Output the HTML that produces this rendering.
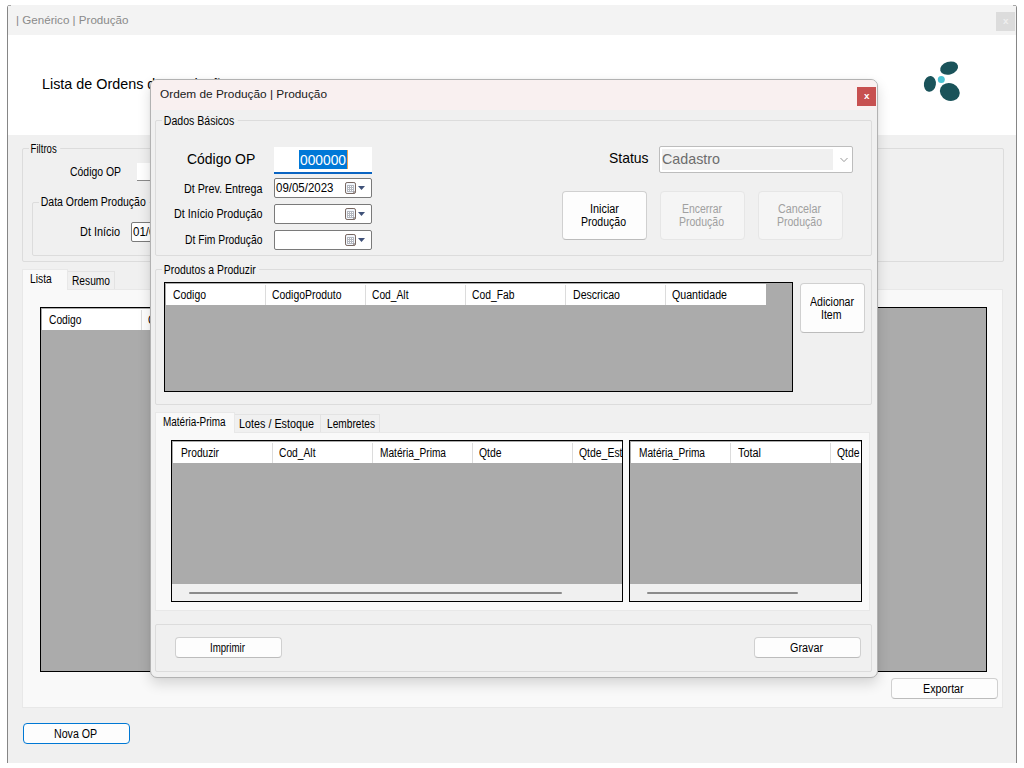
<!DOCTYPE html>
<html lang="pt-BR">
<head>
<meta charset="utf-8">
<title>Genérico | Produção</title>
<style>
*{box-sizing:border-box;margin:0;padding:0}
html,body{width:1024px;height:768px;overflow:hidden;background:#fff}
body{font-family:"Liberation Sans",sans-serif;font-size:11px;color:#000;position:relative}
.a{position:absolute}
.t{position:absolute;white-space:nowrap;transform-origin:0 50%;font-family:"Liberation Sans",sans-serif}
.gb{position:absolute;border:1px solid #dcdcdc;border-radius:2px}
.btn{position:absolute;background:#fdfdfd;border:1px solid #d0d0d0;border-bottom-color:#bcbcbc;border-radius:4px}
.btn.dis{background:#f5f5f5;border-color:#e6e6e6}
.grid{position:absolute;background:#ababab;border:1px solid #000;overflow:hidden}
.grid .hd{position:absolute;left:1px;top:1px;height:21px;background:#fff}
.grid .dv{position:absolute;top:2px;height:20px;width:1px;background:#dcdcdc}
.grid .sb{position:absolute;left:0;right:0;bottom:0;height:17px;background:#f0f0f0}
.grid .th{position:absolute;height:2px;top:8px;background:#8b8b8b;border-radius:1px}
.dp{position:absolute;background:#fff;border:1px solid #7a7a7a;border-radius:2px}
.tab{position:absolute;background:#f0f0f0;border:1px solid #e3e3e3;border-bottom:none}
.tab.sel{background:#f9f9f9;border-color:#e8e8e8}
.page{position:absolute;background:#f9f9f9;border:1px solid #e8e8e8}
</style>
</head>
<body>

<svg width="0" height="0" style="position:absolute"><defs>
<symbol id="cal" viewBox="0 0 22 13">
  <rect x="0.5" y="0.5" width="10" height="11" rx="1.6" fill="#f2f6fc" stroke="#77665f" stroke-width="1"/>
  <rect x="2" y="3" width="7" height="7" fill="#b4b8c0"/>
  <g fill="#fff"><rect x="3" y="4" width="1" height="1"/><rect x="5" y="4" width="1" height="1"/><rect x="7" y="4" width="1" height="1"/>
  <rect x="3" y="6" width="1" height="1"/><rect x="5" y="6" width="1" height="1"/><rect x="7" y="6" width="1" height="1"/>
  <rect x="3" y="8" width="1" height="1"/><rect x="5" y="8" width="1" height="1"/><rect x="7" y="8" width="1" height="1"/></g>
  <path d="M8.4 9.4 L10.4 9.4 L8.4 11.4 Z" fill="#6f5f5a"/>
  <path d="M13 4 L20 4 L16.5 8 Z" fill="#3f5178"/>
</symbol></defs></svg>
<!-- ================= MAIN WINDOW ================= -->
<div class="a" id="win" style="left:7px;top:5px;width:1010px;height:758px;background:#f0f0f0;border-left:1px solid #868686;border-right:1px solid #868686;border-top-left-radius:3px;border-top-right-radius:3px;overflow:hidden"></div>
<div class="a" style="left:8px;top:5px;width:1008px;height:30px;background:#f3f3f3"></div>
<div class="a" style="left:1013px;top:5px;width:3px;height:1px;background:#a8a8a8"></div>
<div class="a" style="left:8px;top:5px;width:3px;height:1px;background:#a8a8a8"></div>
<div class="a" style="left:996px;top:12px;width:19px;height:19px;background:#dcdcdc"></div>
<div class="a" style="left:8px;top:35px;width:1008px;height:100px;background:#fff"></div>

<!-- logo -->
<svg class="a" style="left:900px;top:40px" width="96" height="72" viewBox="0 0 96 72">
  <ellipse cx="49.1" cy="28.1" rx="9.2" ry="6.4" transform="rotate(-17 49.1 28.1)" fill="#1a535a"/>
  <ellipse cx="29.9" cy="43.9" rx="6.0" ry="8.0" transform="rotate(8 29.9 43.9)" fill="#1a535a"/>
  <ellipse cx="49.8" cy="52.0" rx="10.2" ry="8.7" transform="rotate(25 49.8 52)" fill="#1a535a"/>
  <circle cx="41.3" cy="39.6" r="3.5" fill="#4cc3d3"/>
</svg>

<!-- Filtros groupbox -->
<div class="gb" style="left:22px;top:148px;width:982px;height:114px"></div>
<div class="a" style="left:137px;top:163px;width:100px;height:18px;background:#fff;border-bottom:1px solid #8a8a8a"></div>
<div class="gb" style="left:32px;top:202px;width:500px;height:54px"></div>
<div class="dp" style="left:131px;top:222px;width:98px;height:20px"></div>

<!-- main tab control -->
<div class="page" style="left:22px;top:289px;width:981px;height:419px"></div>
<div class="tab" style="left:67px;top:271px;width:48px;height:18px"></div>
<div class="tab sel" style="left:22px;top:269px;width:46px;height:21px"></div>

<!-- main grid -->
<div class="grid" style="left:40px;top:307px;width:947px;height:365px">
  <div class="hd" style="width:700px"></div>
  <div class="dv" style="left:100px"></div>
  <div class="dv" style="left:200px"></div>
</div>

<div class="btn" style="left:891px;top:678px;width:107px;height:21px"></div>
<div class="btn" style="left:23px;top:723px;width:107px;height:21px;border:1px solid #0078d4;background:#fdfdfd"></div>

<span class="t" style="left:16.30px;top:12.18px;font-size:11.6px;line-height:16px;transform:scaleX(1.0011);color:#8a8a8a;">| Genérico | Produção</span>
<span class="t" style="left:41.70px;top:74.05px;font-size:15px;line-height:20px;transform:scaleX(0.9573);color:#000;">Lista de Ordens de Produção</span>
<span class="t" style="left:30.50px;top:140.84px;font-size:12px;line-height:16px;transform:scaleX(0.8000);color:#000;background:#f0f0f0;padding:0 4px 0 2px;margin-left:-2px;">Filtros</span>
<span class="t" style="left:70.00px;top:163.84px;font-size:12px;line-height:16px;transform:scaleX(0.8688);color:#000;">Código OP</span>
<span class="t" style="left:40.50px;top:194.34px;font-size:12px;line-height:16px;transform:scaleX(0.8745);color:#000;background:#f0f0f0;padding:0 4px 0 2px;margin-left:-2px;">Data Ordem Produção</span>
<span class="t" style="left:79.50px;top:224.34px;font-size:12px;line-height:16px;transform:scaleX(0.9088);color:#000;">Dt Início</span>
<span class="t" style="left:133.00px;top:224.34px;font-size:12px;line-height:16px;transform:scaleX(0.9573);color:#000;">01/05/2023</span>
<span class="t" style="left:29.50px;top:270.84px;font-size:12px;line-height:16px;transform:scaleX(0.8577);color:#000;">Lista</span>
<span class="t" style="left:71.50px;top:272.84px;font-size:12px;line-height:16px;transform:scaleX(0.8503);color:#000;">Resumo</span>
<span class="t" style="left:49.00px;top:311.84px;font-size:12px;line-height:16px;transform:scaleX(0.8546);color:#000;">Codigo</span>
<span class="t" style="left:148.00px;top:311.84px;font-size:12px;line-height:16px;transform:scaleX(0.8681);color:#000;">CodigoProduto</span>
<span class="t" style="left:922.80px;top:681.34px;font-size:12px;line-height:16px;transform:scaleX(0.8973);color:#000;">Exportar</span>
<span class="t" style="left:53.80px;top:725.84px;font-size:12px;line-height:16px;transform:scaleX(0.8873);color:#000;">Nova OP</span>
<span class="t" style="left:1002.50px;top:14.07px;font-size:9.6px;line-height:14px;transform:scaleX(1.0292);color:#efefef;font-weight:bold;">x</span>

<!-- ================= DIALOG ================= -->
<div class="a" id="dlg" style="left:150px;top:79px;width:728px;height:599px;background:#f0f0f0;border:1px solid #b2b2b2;border-radius:7px;box-shadow:0 6px 13px rgba(0,0,0,.14),0 0 3px rgba(0,0,0,.05);overflow:hidden">
  <div class="a" style="left:0;top:0;width:728px;height:30px;background:#f9f0f0"></div>
</div>
<div class="a" style="left:857px;top:87px;width:19px;height:19px;background:#c75050"></div>

<!-- Dados Basicos -->
<div class="gb" style="left:155px;top:120px;width:717px;height:136px"></div>
<div class="a" style="left:274px;top:147px;width:98px;height:27px;background:#fff;border-bottom:2px solid #0a64c2"></div>
<div class="a" style="left:299px;top:150px;width:48px;height:19px;background:#0078d7"></div>
<div class="a" style="left:347px;top:150px;width:1px;height:19px;background:#f0a050"></div>

<div class="dp" style="left:274px;top:178px;width:98px;height:20px"></div>
<div class="dp" style="left:274px;top:204px;width:98px;height:20px"></div>
<div class="dp" style="left:274px;top:230px;width:98px;height:20px"></div>


<svg class="a" style="left:345px;top:182px" width="22" height="13"><use href="#cal"/></svg>
<svg class="a" style="left:345px;top:208px" width="22" height="13"><use href="#cal"/></svg>
<svg class="a" style="left:345px;top:234px" width="22" height="13"><use href="#cal"/></svg>
<!-- status combo -->
<div class="a" style="left:659px;top:146px;width:194px;height:27px;background:#fff;border:1px solid #bdbdbd;border-radius:2px"></div>
<div class="a" style="left:662px;top:149px;width:171px;height:21px;background:#f0f0f0"></div>
<svg class="a" style="left:839px;top:156px" width="10" height="8" viewBox="0 0 10 8"><path d="M1.5 2 L5 5.6 L8.5 2" stroke="#9a9a9a" stroke-width="1" fill="none"/></svg>

<div class="btn" style="left:562px;top:191px;width:85px;height:49px"></div>
<div class="btn dis" style="left:660px;top:191px;width:85px;height:49px"></div>
<div class="btn dis" style="left:758px;top:191px;width:85px;height:49px"></div>

<!-- Produtos a Produzir -->
<div class="gb" style="left:155px;top:269px;width:717px;height:136px"></div>
<div class="grid" style="left:164px;top:282px;width:629px;height:110px">
  <div class="hd" style="width:600px"></div>
  <div class="dv" style="left:100px"></div><div class="dv" style="left:200px"></div><div class="dv" style="left:300px"></div>
  <div class="dv" style="left:400px"></div><div class="dv" style="left:500px"></div>
</div>
<div class="btn" style="left:800px;top:283px;width:65px;height:50px"></div>

<!-- dialog tabs -->
<div class="page" style="left:155px;top:432px;width:715px;height:179px"></div>
<div class="tab" style="left:234px;top:414px;width:87px;height:18px"></div>
<div class="tab" style="left:320px;top:414px;width:60px;height:18px"></div>
<div class="tab sel" style="left:155px;top:412px;width:80px;height:21px"></div>

<div class="grid" style="left:171px;top:440px;width:452px;height:162px">
  <div class="hd" style="width:452px"></div>
  <div class="dv" style="left:100px"></div><div class="dv" style="left:200px"></div><div class="dv" style="left:300px"></div><div class="dv" style="left:400px"></div>
  <div class="sb"><div class="th" style="left:17px;width:373px"></div></div>
</div>
<div class="grid" style="left:629px;top:440px;width:233px;height:162px">
  <div class="hd" style="width:233px"></div>
  <div class="dv" style="left:100px"></div><div class="dv" style="left:200px"></div>
  <div class="sb"><div class="th" style="left:17px;width:151px"></div></div>
</div>

<!-- bottom groupbox -->
<div class="gb" style="left:155px;top:624px;width:717px;height:48px"></div>
<div class="btn" style="left:175px;top:637px;width:107px;height:21px"></div>
<div class="btn" style="left:754px;top:637px;width:107px;height:21px"></div>

<span class="t" style="left:159.50px;top:86.48px;font-size:11.6px;line-height:16px;transform:scaleX(1.0215);color:#1a1a1a;">Ordem de Produção | Produção</span>
<span class="t" style="left:863.90px;top:89.07px;font-size:9.6px;line-height:14px;transform:scaleX(1.0292);color:#fff;font-weight:bold;">x</span>
<span class="t" style="left:163.50px;top:112.84px;font-size:12px;line-height:16px;transform:scaleX(0.8807);color:#000;background:#f0f0f0;padding:0 4px 0 2px;margin-left:-2px;">Dados Básicos</span>
<span class="t" style="left:186.80px;top:148.94px;font-size:14.6px;line-height:20px;transform:scaleX(0.9567);color:#000;">Código OP</span>
<span class="t" style="left:299.50px;top:149.54px;font-size:14.6px;line-height:20px;transform:scaleX(0.9445);color:#fff;">000000</span>
<span class="t" style="left:183.50px;top:180.84px;font-size:12px;line-height:16px;transform:scaleX(0.8938);color:#000;">Dt Prev. Entrega</span>
<span class="t" style="left:275.80px;top:180.14px;font-size:12px;line-height:16px;transform:scaleX(0.9557);color:#000;">09/05/2023</span>
<span class="t" style="left:173.50px;top:205.84px;font-size:12px;line-height:16px;transform:scaleX(0.8965);color:#000;">Dt Início Produção</span>
<span class="t" style="left:184.50px;top:231.84px;font-size:12px;line-height:16px;transform:scaleX(0.8608);color:#000;">Dt Fim Produção</span>
<span class="t" style="left:608.50px;top:148.34px;font-size:14.6px;line-height:20px;transform:scaleX(0.9547);color:#000;">Status</span>
<span class="t" style="left:661.50px;top:149.44px;font-size:14.6px;line-height:20px;transform:scaleX(0.9794);color:#6d6d6d;">Cadastro</span>
<span class="t" style="left:589.50px;top:200.84px;font-size:12px;line-height:16px;transform:scaleX(0.9058);color:#000;">Iniciar</span>
<span class="t" style="left:580.50px;top:213.94px;font-size:12px;line-height:16px;transform:scaleX(0.8759);color:#000;">Produção</span>
<span class="t" style="left:681.50px;top:200.84px;font-size:12px;line-height:16px;transform:scaleX(0.8693);color:#a0a0a0;">Encerrar</span>
<span class="t" style="left:678.50px;top:213.94px;font-size:12px;line-height:16px;transform:scaleX(0.8759);color:#a0a0a0;">Produção</span>
<span class="t" style="left:777.50px;top:200.84px;font-size:12px;line-height:16px;transform:scaleX(0.8953);color:#a0a0a0;">Cancelar</span>
<span class="t" style="left:776.50px;top:213.94px;font-size:12px;line-height:16px;transform:scaleX(0.8759);color:#a0a0a0;">Produção</span>
<span class="t" style="left:163.50px;top:261.84px;font-size:12px;line-height:16px;transform:scaleX(0.8674);color:#000;background:#f0f0f0;padding:0 4px 0 2px;margin-left:-2px;">Produtos a Produzir</span>
<span class="t" style="left:173.00px;top:286.84px;font-size:12px;line-height:16px;transform:scaleX(0.8677);color:#000;">Codigo</span>
<span class="t" style="left:272.00px;top:286.84px;font-size:12px;line-height:16px;transform:scaleX(0.8681);color:#000;">CodigoProduto</span>
<span class="t" style="left:372.00px;top:286.84px;font-size:12px;line-height:16px;transform:scaleX(0.8547);color:#000;">Cod_Alt</span>
<span class="t" style="left:472.00px;top:286.84px;font-size:12px;line-height:16px;transform:scaleX(0.8608);color:#000;">Cod_Fab</span>
<span class="t" style="left:572.50px;top:286.84px;font-size:12px;line-height:16px;transform:scaleX(0.8808);color:#000;">Descricao</span>
<span class="t" style="left:672.00px;top:286.84px;font-size:12px;line-height:16px;transform:scaleX(0.8862);color:#000;">Quantidade</span>
<span class="t" style="left:809.50px;top:293.84px;font-size:12px;line-height:16px;transform:scaleX(0.8795);color:#000;">Adicionar</span>
<span class="t" style="left:821.00px;top:306.84px;font-size:12px;line-height:16px;transform:scaleX(0.8782);color:#000;">Item</span>
<span class="t" style="left:163.00px;top:413.94px;font-size:12px;line-height:16px;transform:scaleX(0.8294);color:#000;">Matéria-Prima</span>
<span class="t" style="left:239.00px;top:415.84px;font-size:12px;line-height:16px;transform:scaleX(0.8994);color:#000;">Lotes / Estoque</span>
<span class="t" style="left:326.50px;top:415.84px;font-size:12px;line-height:16px;transform:scaleX(0.8465);color:#000;">Lembretes</span>
<span class="t" style="left:180.50px;top:444.84px;font-size:12px;line-height:16px;transform:scaleX(0.8503);color:#000;">Produzir</span>
<span class="t" style="left:279.00px;top:444.84px;font-size:12px;line-height:16px;transform:scaleX(0.8547);color:#000;">Cod_Alt</span>
<span class="t" style="left:379.50px;top:444.84px;font-size:12px;line-height:16px;transform:scaleX(0.8458);color:#000;">Matéria_Prima</span>
<span class="t" style="left:479.00px;top:444.84px;font-size:12px;line-height:16px;transform:scaleX(0.8649);color:#000;">Qtde</span>
<div class="a" style="left:0;top:0;width:622px;height:768px;overflow:hidden"><span class="t" style="left:579.00px;top:444.84px;font-size:12px;line-height:16px;transform:scaleX(0.8695);color:#000;">Qtde_Est</span></div>
<span class="t" style="left:638.50px;top:444.84px;font-size:12px;line-height:16px;transform:scaleX(0.8458);color:#000;">Matéria_Prima</span>
<span class="t" style="left:737.50px;top:444.84px;font-size:12px;line-height:16px;transform:scaleX(0.9070);color:#000;">Total</span>
<div class="a" style="left:0;top:0;width:861px;height:768px;overflow:hidden"><span class="t" style="left:837.00px;top:444.84px;font-size:12px;line-height:16px;transform:scaleX(0.8649);color:#000;">Qtde</span></div>
<span class="t" style="left:210.10px;top:640.24px;font-size:12px;line-height:16px;transform:scaleX(0.8055);color:#000;">Imprimir</span>
<span class="t" style="left:789.50px;top:639.84px;font-size:12px;line-height:16px;transform:scaleX(0.8995);color:#000;">Gravar</span>

</body>
</html>
